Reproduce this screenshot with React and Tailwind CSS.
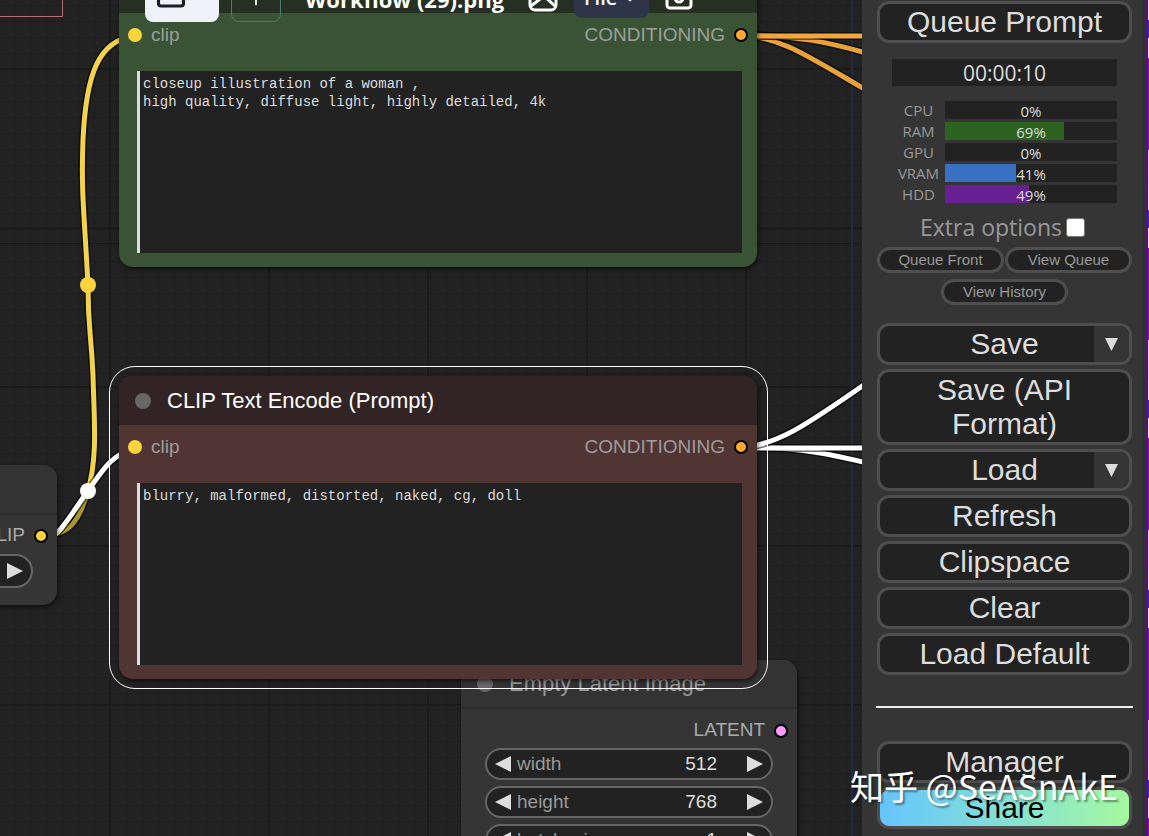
import { Folder, ChevronDown, Plus } from "lucide-react";

const usage = [
  { name: "CPU", value: 0, color: "bg-transparent" },
  { name: "RAM", value: 69, color: "bg-[#2c6320]" },
  { name: "GPU", value: 0, color: "bg-transparent" },
  { name: "VRAM", value: 41, color: "bg-[#3871c2]" },
  { name: "HDD", value: 49, color: "bg-[#662091]" },
];

function Slot({ color, outlined }) {
  return (
    <span
      className={`size-[14px] shrink-0 rounded-full ${color} ${outlined ? "border-2 border-black" : ""}`}
    />
  );
}

function Grid() {
  return (
    <svg className="absolute inset-0 h-full w-full">
      <defs>
        <pattern id="minor" x="14" y="5" width="16" height="16" patternUnits="userSpaceOnUse">
          <path d="M0.5 0V16M0 0.5H16" stroke="#1e1e1e" strokeWidth="1" />
        </pattern>
        <pattern id="major" x="109" y="68" width="159" height="159" patternUnits="userSpaceOnUse">
          <path d="M1 0V159M0 1H159" stroke="#1b1b1b" strokeWidth="2" />
        </pattern>
      </defs>
      <rect width="100%" height="100%" fill="url(#minor)" />
      <rect width="100%" height="100%" fill="url(#major)" />
      <path d="M0 243.5H862" stroke="#191919" />
      <path d="M852 0V836" stroke="#232b40" strokeWidth="2" />
      <path d="M0 16.5H62.5V0" fill="none" stroke="#b5726c" />
    </svg>
  );
}

function Wire({ d, color }) {
  return (
    <g fill="none">
      <path d={d} stroke="#000" strokeOpacity="0.55" strokeWidth="8" />
      <path d={d} stroke={color} strokeWidth="5" />
    </g>
  );
}

function Wires() {
  return (
    <svg className="absolute inset-0 h-full w-full">
      <Wire d="M41 536C74 536 80 515 88 491" color="#a8952f" />
      <Wire d="M88 491C98 455 94 420 93 375C91 330 88 330 88 285C84 210 81 190 83 140C86 75 98 40 135 36" color="#f2d34d" />
      <Wire d="M41 546C65 530 72 512 88 491C105 466 112 456 135 447" color="#fff" />
      <circle cx="88" cy="285" r="8" fill="#fbd440" />
      <circle cx="88" cy="491" r="8" fill="#fff" />
      <Wire d="M742 35C785 38 810 58 880 98" color="#e9a23b" />
      <Wire d="M742 35C795 35 830 42 880 57" color="#e9a23b" />
      <Wire d="M742 36H880" color="#f0a63f" />
      <Wire d="M742 447C800 447 830 454 880 466" color="#fff" />
      <Wire d="M742 448H880" color="#fff" />
      <Wire d="M742 448C785 443 815 418 880 374" color="#fff" />
    </svg>
  );
}

function EncodeNode({ title, label, text, body, head, className }) {
  return (
    <section
      className={`absolute left-[119px] flex h-[303px] w-[638px] flex-col rounded-[14px] shadow-[1px_2px_4px_#0009] ${body} ${className}`}
    >
      <header className={`flex h-[49px] shrink-0 items-center gap-4 rounded-t-[14px] px-4 ${head}`}>
        <span className="size-4 rounded-full bg-[#666]" />
        {title && <h2 className="text-[22px] text-white">{title}</h2>}
      </header>
      <div className="flex h-[44px] shrink-0 items-center gap-[9px] px-[9px] text-[19px] text-[#aaa]/90">
        <Slot color="bg-[#fdd43b]" />
        <span>clip</span>
        <span className="ml-auto">CONDITIONING</span>
        <Slot color="bg-[#ffa931]" outlined />
      </div>
      <textarea
        aria-label={label}
        defaultValue={text}
        spellCheck={false}
        className="mx-[15px] mt-[14px] mb-[14px] ml-[18px] block flex-1 resize-none border-l-[3px] border-[#ddd] bg-[#222] px-[3px] py-1 font-['Liberation_Mono',monospace] text-sm/[18px] text-[#ddd] outline-none"
      />
    </section>
  );
}

function NumberWidget({ label, value }) {
  return (
    <div className="flex h-8 items-center rounded-full border-2 border-[#666] bg-[#222] px-2 text-[19px]">
      <button aria-label={`Decrease ${label}`}>
        <svg className="h-4 w-4" viewBox="0 0 16 16">
          <path d="M16 0V16L0 8Z" fill="#ddd" />
        </svg>
      </button>
      <label htmlFor={label} className="ml-1.5 text-[#999]">{label}</label>
      <input
        id={label}
        defaultValue={value}
        className="mr-[30px] min-w-0 flex-1 bg-transparent text-right text-[#ddd] outline-none"
      />
      <button aria-label={`Increase ${label}`}>
        <svg className="h-4 w-4" viewBox="0 0 16 16">
          <path d="M0 0V16L16 8Z" fill="#ddd" />
        </svg>
      </button>
    </div>
  );
}

function LatentNode() {
  return (
    <section className="absolute top-[660px] left-[461px] w-[336px] rounded-[14px] bg-[#353535] pb-10 shadow-[1px_2px_4px_#0009]">
      <header className="flex h-[49px] items-center gap-4 rounded-t-[14px] border-b-2 border-[#2b2b2b] bg-[#333] px-4">
        <span className="size-4 rounded-full bg-[#666]" />
        <h2 className="text-[22px] text-[#999]">Empty Latent Image</h2>
      </header>
      <div className="flex h-[39px] items-center justify-end gap-[9px] px-[9px] pt-1 text-[19px] text-[#aaa]">
        <span>LATENT</span>
        <Slot color="bg-[#ff9cf9]" outlined />
      </div>
      <div className="flex flex-col gap-1.5 px-6">
        <NumberWidget label="width" value="512" />
        <NumberWidget label="height" value="768" />
        <NumberWidget label="batch_size" value="1" />
      </div>
    </section>
  );
}

function LoaderNode() {
  return (
    <section className="absolute top-[465px] left-[-203px] h-[140px] w-[260px] rounded-[14px] bg-[#353535] shadow-[1px_2px_4px_#0009]">
      <header className="h-[50px] rounded-t-[14px] border-b-2 border-[#2b2b2b] bg-[#333]" />
      <div className="flex h-[39px] items-center justify-end gap-[9px] px-[9px] pt-0.5 text-[19px] text-[#aaa]">
        <span>CLIP</span>
        <Slot color="bg-[#fdd43b]" outlined />
      </div>
      <div className="mr-6 flex h-[34px] items-center justify-end rounded-full border-2 border-[#666] bg-[#222] px-2">
        <button aria-label="Next">
          <svg className="h-4 w-4" viewBox="0 0 16 16">
            <path d="M0 0V16L16 8Z" fill="#ddd" />
          </svg>
        </button>
      </div>
    </section>
  );
}

function WorkflowBar() {
  return (
    <div className="absolute top-[-22px] left-[145px] flex items-start font-['Open_Sans',sans-serif]">
      <button aria-label="Workflows" className="flex h-11 w-[74px] items-center justify-center gap-1 rounded-lg bg-[#eef1f8] pb-2 text-[#1b1e28]">
        <Folder size={30} strokeWidth={2.5} />
        <ChevronDown size={18} strokeWidth={3} />
      </button>
      <button aria-label="New workflow" className="ml-3 flex h-11 w-[50px] items-center justify-center rounded-lg border border-[#4a7d6a] pb-1 text-white">
        <Plus size={22} />
      </button>
      <span className="ml-6 text-[22px]/[42px] font-bold whitespace-nowrap text-white">Workflow (29).png</span>
      <svg className="mt-1 ml-6 h-[30px] w-[30px]" viewBox="0 0 30 30" fill="none" stroke="#fff" strokeWidth="3">
        <rect x="2" y="2" width="26" height="26" rx="5" />
        <path d="M3 24L16 14L27 24" />
      </svg>
      <button className="ml-4 flex h-10 w-[75px] items-center justify-center gap-1 rounded-lg bg-[#2e3549] text-xl font-semibold text-white">
        File
        <ChevronDown size={18} strokeWidth={3} />
      </button>
      <svg className="mt-1 ml-4 h-7 w-7" viewBox="0 0 28 28" fill="none" stroke="#fff" strokeWidth="3">
        <rect x="2" y="2" width="24" height="24" rx="3" />
        <circle cx="14" cy="16" r="4" />
      </svg>
    </div>
  );
}

function MenuButton({ children, className = "" }) {
  return (
    <button
      className={`w-full rounded-xl border-[3px] border-[#4e4e4e] bg-[#222] px-5 py-px text-[30px]/[34px] text-[#ddd] ${className}`}
    >
      {children}
    </button>
  );
}

function SplitButton({ children }) {
  return (
    <div className="relative w-full">
      <MenuButton>{children}</MenuButton>
      <button
        aria-label={`${children} options`}
        className="absolute inset-y-[3px] right-[3px] flex w-[35px] items-center justify-center rounded-r-[9px] bg-[#353535]"
      >
        <svg className="h-[13px] w-[13px]" viewBox="0 0 13 13">
          <path d="M0 0H13L6.5 13Z" fill="#ddd" />
        </svg>
      </button>
    </div>
  );
}

function SmallButton({ children }) {
  return (
    <button className="h-[26px] w-[127px] rounded-full border-[3px] border-[#4e4e4e] bg-[#222] text-[15px]/[20px] text-[#999]">
      {children}
    </button>
  );
}

function Sidebar() {
  return (
    <aside className="flex w-[284px] shrink-0 flex-col items-center border-r-4 border-[#2f332f] bg-[#353535] pt-px pr-[9px] pl-[14px]">
      <div className="flex w-full flex-col items-center px-px">
        <MenuButton>Queue Prompt</MenuButton>
        <div className="mt-4 flex w-[225px] flex-col font-['Open_Sans',sans-serif]">
          <div className="h-[27px] bg-[#222] text-center text-[21px]/[28px] text-[#ddd]">00:00:10</div>
          <div className="mt-[15px] flex flex-col gap-[3px]">
            {usage.map((u) => (
              <div key={u.name} className="flex h-[18px] items-center">
                <span className="flex w-[53px] justify-center text-[15px]/[18px] text-[#999]">{u.name}</span>
                <div className="relative h-full flex-1 bg-[#222]">
                  <div className={`h-full ${u.color}`} style={{ width: `${u.value}%` }} />
                  <span className="absolute inset-0 text-center text-[15px]/[20px] text-[#ddd]">{u.value}%</span>
                </div>
              </div>
            ))}
          </div>
        </div>
        <label className="mt-2 flex h-[32px] items-center gap-1 pr-1 font-['Open_Sans',sans-serif] text-[23px] text-[#999]">
          Extra options
          <input type="checkbox" className="size-[19px] appearance-none rounded-[3px] border border-[#767676] bg-white" />
        </label>
        <div className="mt-1 flex flex-wrap justify-center gap-x-px gap-y-1.5">
          <SmallButton>Queue Front</SmallButton>
          <SmallButton>View Queue</SmallButton>
          <SmallButton>View History</SmallButton>
        </div>
        <div className="mt-[18px] flex w-full flex-col gap-1">
          <SplitButton>Save</SplitButton>
          <MenuButton>Save (API Format)</MenuButton>
          <SplitButton>Load</SplitButton>
          <MenuButton>Refresh</MenuButton>
          <MenuButton>Clipspace</MenuButton>
          <MenuButton>Clear</MenuButton>
          <MenuButton>Load Default</MenuButton>
        </div>
      </div>
      <hr className="mt-[31px] mb-[33px] w-full border-t-2 border-[#eee]" />
      <div className="flex w-full flex-col gap-1 px-px">
        <MenuButton>Manager</MenuButton>
        <MenuButton className="bg-linear-to-r from-[#66c3ff] to-[#a6f99c] bg-origin-border text-black">Share</MenuButton>
      </div>
    </aside>
  );
}

export default function App() {
  return (
    <div className="relative flex h-screen overflow-hidden bg-[#222] font-['Liberation_Sans',Arial,sans-serif]">
      <main className="relative min-w-0 flex-1 overflow-hidden">
        <Grid />
        <Wires />
        <LoaderNode />
        <LatentNode />
        <EncodeNode
          label="Positive prompt"
          text={"closeup illustration of a woman ,\nhigh quality, diffuse light, highly detailed, 4k"}
          body="bg-[#3a5335]"
          head="bg-[#253023]"
          className="top-[-36px]"
        />
        <EncodeNode
          title="CLIP Text Encode (Prompt)"
          label="Negative prompt"
          text="blurry, malformed, distorted, naked, cg, doll"
          body="bg-[#513533]"
          head="bg-[#322424]"
          className="top-[376px]"
        />
        <div className="pointer-events-none absolute top-[366px] left-[109px] h-[323px] w-[659px] rounded-[26px] border border-white" />
        <WorkflowBar />
      </main>
      <Sidebar />
      <div className="w-[3px] shrink-0 border-l-2 border-[#5c0f7c] bg-[repeating-linear-gradient(#f4e6fa_0_20px,#2a2fb8_20px_38px,#f4e6fa_38px_58px,#7a1a9c_58px_150px,#e9d0f2_150px_190px)]" />
      <p className="absolute right-[31px] bottom-[30px] font-['Noto_Sans_CJK_SC',sans-serif] text-[34px]/[40px] text-white [text-shadow:2px_2px_2px_#0006]">
        知乎 @SeASnAkE
      </p>
    </div>
  );
}
